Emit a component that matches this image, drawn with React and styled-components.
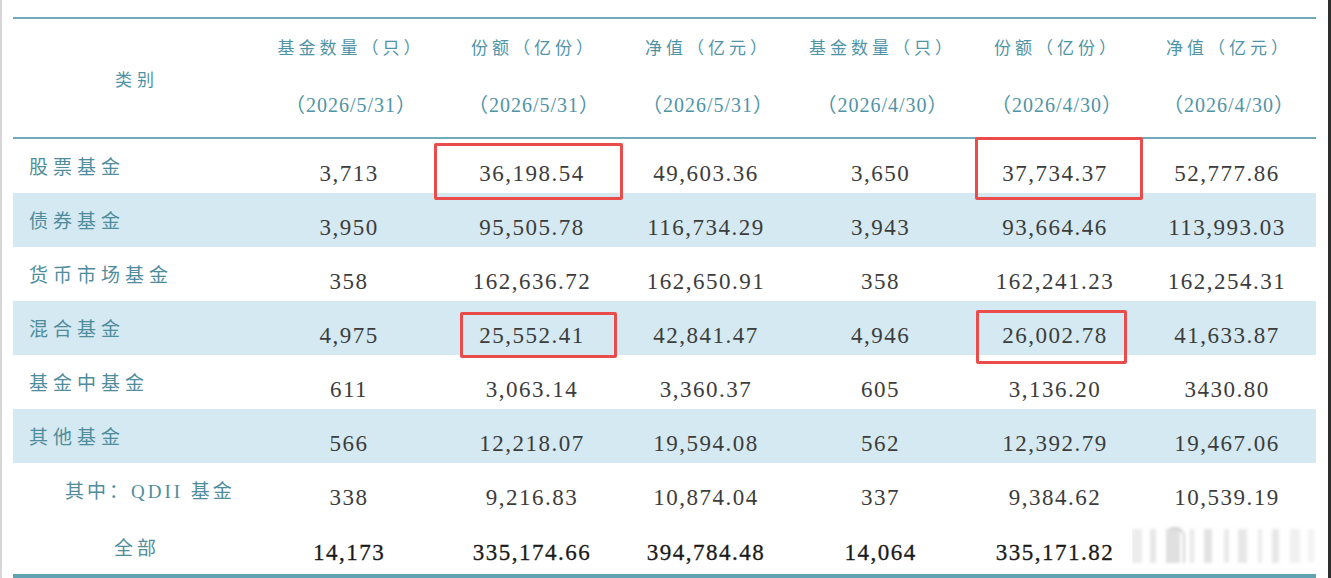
import React from 'react';
import styled, { createGlobalStyle } from 'styled-components';

const GlobalStyle = createGlobalStyle`
  html, body {
    margin: 0;
    padding: 0;
    background: #ffffff;
  }
`;

const columns = [
  { title: '基金数量（只）', date: '（2026/5/31）' },
  { title: '份额（亿份）', date: '（2026/5/31）' },
  { title: '净值（亿元）', date: '（2026/5/31）' },
  { title: '基金数量（只）', date: '（2026/4/30）' },
  { title: '份额（亿份）', date: '（2026/4/30）' },
  { title: '净值（亿元）', date: '（2026/4/30）' },
];

// mark: [top, right, bottom, left] offsets of the red box around the cell
const rows = [
  {
    name: '股票基金',
    values: ['3,713', '36,198.54', '49,603.36', '3,650', '37,734.37', '52,777.86'],
    marks: { 1: [4, 0, -7, -7], 4: [-2, -5, -7, 3] },
  },
  {
    name: '债券基金',
    shaded: true,
    values: ['3,950', '95,505.78', '116,734.29', '3,943', '93,664.46', '113,993.03'],
  },
  {
    name: '货币市场基金',
    values: ['358', '162,636.72', '162,650.91', '358', '162,241.23', '162,254.31'],
  },
  {
    name: '混合基金',
    shaded: true,
    values: ['4,975', '25,552.41', '42,841.47', '4,946', '26,002.78', '41,633.87'],
    marks: { 1: [11, 6, -3, 19], 4: [9, 11, -9, 4] },
  },
  {
    name: '基金中基金',
    values: ['611', '3,063.14', '3,360.37', '605', '3,136.20', '3430.80'],
  },
  {
    name: '其他基金',
    shaded: true,
    values: ['566', '12,218.07', '19,594.08', '562', '12,392.79', '19,467.06'],
  },
  {
    name: '其中：QDII 基金',
    sub: true,
    values: ['338', '9,216.83', '10,874.04', '337', '9,384.62', '10,539.19'],
  },
];

const total = ['14,173', '335,174.66', '394,784.48', '14,064', '335,171.82', ''];

function Watermark() {
  const bars = [
    [0, 10, 0.3], [18, 6, 0.4], [34, 14, 0.5], [58, 4, 0.4], [72, 8, 0.45],
    [92, 5, 0.35], [106, 9, 0.4], [126, 4, 0.3], [140, 7, 0.4], [158, 10, 0.25], [176, 6, 0.2],
  ];
  return (
    <WatermarkBox>
      <svg width="190" height="44" viewBox="0 0 190 44">
        <defs>
          <filter id="soft" x="-20%" y="-20%" width="140%" height="140%">
            <feGaussianBlur stdDeviation="1.6" />
          </filter>
        </defs>
        <g filter="url(#soft)">
          {bars.map(([x, w, o]) => (
            <rect key={x} x={x} y="6" width={w} height="34" fill="#c2c2c2" opacity={o} />
          ))}
          <path d="M38 6 q10 -4 14 6 v28" fill="none" stroke="#a0a0a0" strokeWidth="2" opacity="0.45" />
        </g>
      </svg>
    </WatermarkBox>
  );
}

function App() {
  return (
    <>
      <GlobalStyle />
      <Page>
        <Table>
          <Header>
            <HeadLabel>类别</HeadLabel>
            {columns.map((col, i) => (
              <HeadCell key={i}>
                <HeadTitle>{col.title}</HeadTitle>
                <HeadDate>{col.date}</HeadDate>
              </HeadCell>
            ))}
          </Header>
          {rows.map((row) => (
            <Row key={row.name} $shaded={row.shaded}>
              <Label $sub={row.sub}>{row.name}</Label>
              {row.values.map((v, i) => (
                <Cell key={i}>
                  {v}
                  {row.marks && row.marks[i] && <Mark $inset={row.marks[i]} />}
                </Cell>
              ))}
            </Row>
          ))}
          <TotalRow>
            <TotalLabel>全部</TotalLabel>
            {total.map((v, i) => (
              <TotalCell key={i}>
                {v}
                {i === 5 && <Watermark />}
              </TotalCell>
            ))}
          </TotalRow>
        </Table>
      </Page>
    </>
  );
}

const Page = styled.div`
  box-sizing: border-box;
  width: 1331px;
  height: 578px;
  overflow: hidden;
  padding: 17px 12px 0 11px;
  border-left: 2px solid #d6d6d6;
  border-right: 3px solid #2e2e2e;
  background: #ffffff;
`;

const Table = styled.div`
  width: 1303px;
  border-top: 2px solid #6fabba;
  border-bottom: 4px solid #62a3b3;
`;

const grid = `
  display: grid;
  grid-template-columns: 244px 184px 182px 166px 183px 166px 178px;
`;

const Header = styled.div`
  ${grid}
  height: 118px;
  border-bottom: 2px solid #6fabba;
`;

const HeadLabel = styled.div`
  display: flex;
  align-items: center;
  justify-content: center;
  padding-left: 4px;
  font-family: 'Noto Sans CJK SC', sans-serif;
  font-size: 17px;
  letter-spacing: 5px;
  color: #4f94a6;
`;

const HeadCell = styled.div`
  display: flex;
  flex-direction: column;
  align-items: center;
  padding: 16px 0 0 4px;
  gap: 34px;
`;

const HeadTitle = styled.div`
  font-family: 'Noto Sans CJK SC', sans-serif;
  font-size: 17px;
  line-height: 24px;
  letter-spacing: 4px;
  color: #4f94a6;
  white-space: nowrap;
`;

const HeadDate = styled.div`
  font-family: 'Liberation Serif', 'Noto Sans CJK SC', serif;
  font-size: 20px;
  line-height: 24px;
  letter-spacing: 1px;
  color: #4f94a6;
  white-space: nowrap;
`;

const Row = styled.div`
  ${grid}
  height: 54px;
  background: ${(p) => (p.$shaded ? '#d4e9f1' : '#ffffff')};
`;

const Label = styled.div`
  padding: 16px 0 0 ${(p) => (p.$sub ? '52px' : '16px')};
  font-family: 'Liberation Serif', 'Noto Sans CJK SC', serif;
  font-size: 19px;
  line-height: 26px;
  letter-spacing: ${(p) => (p.$sub ? '3px' : '5px')};
  color: #4f8d9c;
  white-space: nowrap;
`;

const Cell = styled.div`
  position: relative;
  padding-top: 22px;
  text-align: center;
  font-family: 'Liberation Serif', serif;
  font-size: 23px;
  line-height: 26px;
  letter-spacing: 1.5px;
  color: #3c3c3c;
`;

const Mark = styled.span`
  position: absolute;
  z-index: 2;
  top: ${(p) => p.$inset[0]}px;
  right: ${(p) => p.$inset[1]}px;
  bottom: ${(p) => p.$inset[2]}px;
  left: ${(p) => p.$inset[3]}px;
  border: 3px solid #ea4b4b;
  border-radius: 2px;
  pointer-events: none;
`;

const TotalRow = styled(Row)`
  height: 57px;
`;

const TotalLabel = styled.div`
  padding: 17px 0 0 4px;
  text-align: center;
  font-family: 'Noto Sans CJK SC', sans-serif;
  font-size: 19px;
  line-height: 26px;
  letter-spacing: 4px;
  color: #4f8d9c;
`;

const TotalCell = styled(Cell)`
  padding-top: 23px;
  color: #1a1a1a;
  -webkit-text-stroke: 0.3px #1a1a1a;
`;

const WatermarkBox = styled.div`
  position: absolute;
  right: -6px;
  top: 6px;
  z-index: 2;
`;

export default App;
